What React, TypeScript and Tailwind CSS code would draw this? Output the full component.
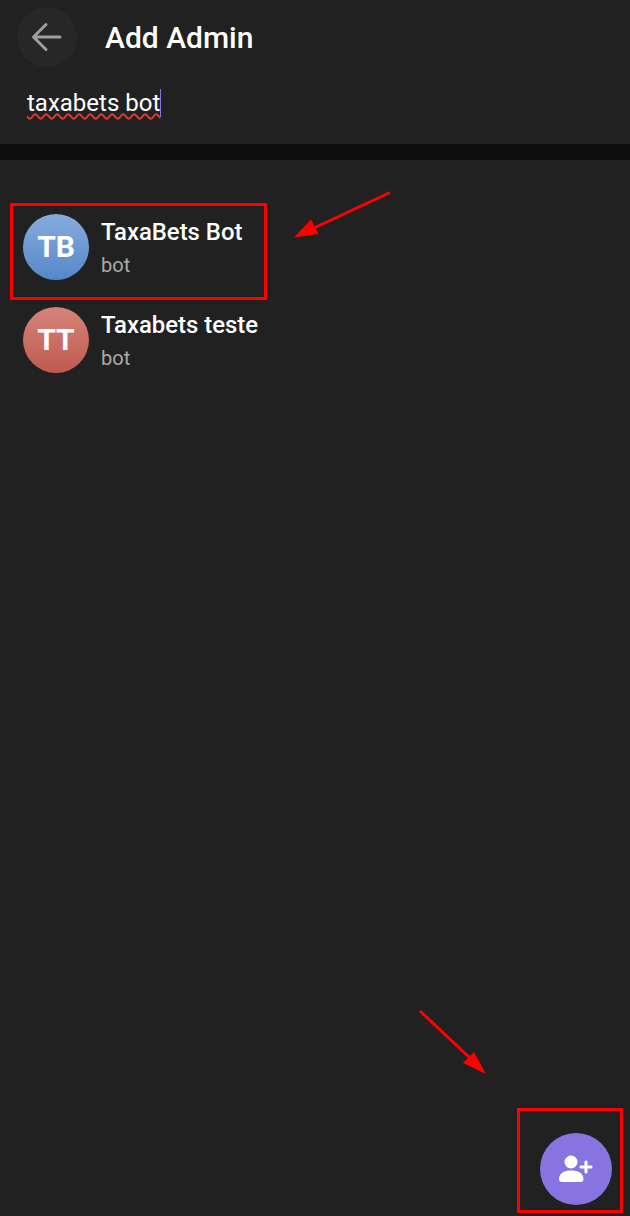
const members = [
  { initials: "TB", name: "TaxaBets Bot", gradient: "bg-gradient-to-b from-[#86acdc] to-[#5688c9]" },
  { initials: "TT", name: "Taxabets teste", gradient: "bg-gradient-to-b from-[#d5847a] to-[#bf5a50]" },
];

const BackIcon = () => (
  <svg width="32" height="32" viewBox="0 0 32 32" fill="none" stroke="#9e9e9e" strokeWidth="3" strokeLinecap="round" strokeLinejoin="round">
    <path d="M29 16H3M15 3.5 2.5 16 15 28.5" />
  </svg>
);

const AddUserIcon = () => (
  <svg width="36" height="30" viewBox="0 0 36 30" fill="white">
    <circle cx="13" cy="8" r="6.5" />
    <path d="M1 25c0-6 5.500-8.500 12-8.500S25.500 19 25.500 25c0 1.700-1 3-3 3H4c-2 0-3-1.300-3-3z" />
    <path d="M28 6.500c.9 0 1.500.6 1.500 1.500v3.500H33c.9 0 1.500.6 1.500 1.500s-.6 1.500-1.500 1.500h-3.500V18c0 .9-.6 1.500-1.500 1.500s-1.500-.6-1.500-1.500v-3.500H23c-.9 0-1.500-.6-1.500-1.500s.6-1.500 1.500-1.500h3.500V8c0-.9.6-1.500 1.500-1.500z" />
  </svg>
);

const MemberRow = ({ initials, name, gradient }: { initials: string; name: string; gradient: string }) => (
  <div className="flex h-[93px] items-start gap-3 pl-[23px]">
    <div className={`flex h-[66px] w-[66px] items-center justify-center rounded-full pb-[2px] text-[30px] font-bold text-white ${gradient}`}>
      {initials}
    </div>
    <div className="flex flex-col">
      <span className="mt-[3px] h-[30px] text-[23.9px] leading-[30px] font-medium text-white">{name}</span>
      <span className="mt-[4px] text-[20px] leading-[28px] text-[#aaaaaa]">bot</span>
    </div>
  </div>
);

export default function App() {
  return (
    <div className="relative h-[1216px] w-[630px] overflow-hidden bg-[#212121] font-['Roboto',sans-serif]">
      <header className="h-[144px]">
        <div className="flex items-start gap-7 pt-[7px] pl-[17px]">
          <div className="flex h-[60px] w-[60px] items-center justify-center rounded-full bg-[#272727]">
            <BackIcon />
          </div>
          <h1 className="pt-px text-[30px] leading-[60px] font-medium text-white">Add Admin</h1>
        </div>
        <div className="mt-[21px] flex pl-[27px]">
          <span className="text-[24px] leading-[28px] text-white underline decoration-[#e53935] decoration-wavy decoration-2 underline-offset-[2px]">
            taxabets bot
          </span>
          <span className="h-[28px] w-px bg-[#8774e1]" />
        </div>
      </header>
      <div className="h-4 bg-[#0f0f0f]" />

      <div className="pt-[54px]">
        {members.map((member) => (
          <MemberRow key={member.initials} {...member} />
        ))}
      </div>

      <button className="absolute top-[1133px] left-[540px] flex h-[72px] w-[72px] items-center justify-center rounded-full bg-[#8774e1]">
        <AddUserIcon />
      </button>

      {/* annotations drawn over the screenshot */}
      <div className="absolute top-[203px] left-[10px] h-[97px] w-[257px] border-[3px] border-[#ff0000]" />
      <div className="absolute top-[1108px] left-[517px] h-[105px] w-[106px] border-[3px] border-[#ff0000]" />
      <svg className="absolute top-0 left-0" width="630" height="1216" fill="#ff0000" stroke="none">
        <path d="M390 192.500 314 228" stroke="#ff0000" strokeWidth="3" />
        <path d="M294 237.500 311 219.500 318.500 234z" />
        <path d="M420 1011 470 1058" stroke="#ff0000" strokeWidth="3" />
        <path d="M486 1074 474 1052 463 1063z" />
      </svg>
    </div>
  );
}
